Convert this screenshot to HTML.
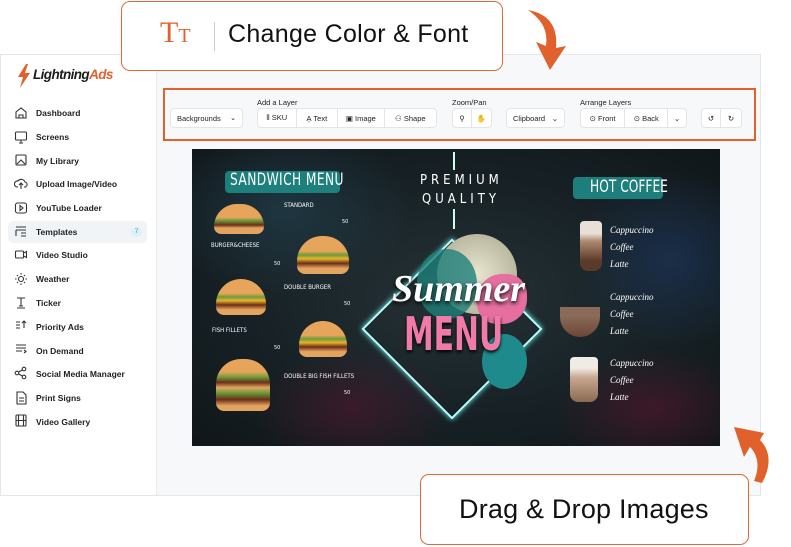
<!DOCTYPE html>
<html><head><meta charset="utf-8"><style>
*{box-sizing:border-box;margin:0;padding:0}
body{width:791px;height:547px;background:#fff;font-family:"Liberation Sans",sans-serif;position:relative;overflow:hidden;color:#222}
.abs{position:absolute}
.frame{left:0;top:54px;width:761px;height:442px;border:1px solid #e4e6ea;background:#f7f8fa}
.side{left:1px;top:55px;width:156px;height:440px;background:#fff;border-right:1px solid #e8eaee}
.item{position:absolute;left:36px;font-size:8.5px;color:#222;font-weight:bold;letter-spacing:0}
.tb{left:163px;top:88px;width:593px;height:53px;border:2px solid #e0612c;background:#f7f8fa}
.btn{position:absolute;top:108px;height:20px;background:#fff;border:1px solid #e3e5e9;border-radius:4px;font-size:7.5px;color:#222;display:flex;align-items:center}
.seg{border-right:1px solid #e3e5e9;height:100%;display:flex;align-items:center;justify-content:center;gap:3px}
.lbl{position:absolute;top:98px;font-size:7.5px;color:#222}
.callout{border:1.5px solid #e0693a;border-radius:9px;background:#fff}
.menu{left:192px;top:149px;width:528px;height:297px;background:radial-gradient(ellipse at 50% 50%,#263236 0%,#162024 60%,#101619 100%);overflow:hidden}
.mt{position:absolute;color:#fff;font-family:"DejaVu Sans Condensed","Liberation Sans",sans-serif}
</style></head><body>

<div class="abs frame"></div>
<div class="abs side"></div>

<svg class="abs" style="left:16px;top:64px" width="16" height="24" viewBox="0 0 16 24"><path d="M10 0 L2 13 H7 L4 24 L14 9 H9 L12 0Z" fill="#e0612c"/></svg>
<div class="abs" style="left:33px;top:67px;font-size:13.5px;font-weight:bold;font-style:italic;letter-spacing:-0.6px;color:#1c1c1c">Lightning<span style="color:#e0612c">Ads</span></div>

<div class="abs" style="left:8px;top:221px;width:139px;height:22px;background:#f1f4f7;border-radius:5px"></div>
<div class="abs" style="left:131px;top:227px;width:11px;height:10px;border-radius:50%;background:#dff0f8;color:#3a9ad0;font-size:6.5px;text-align:center;line-height:10px">7</div>
<div class="item" style="top:108px">Dashboard</div>
<div class="item" style="top:132px">Screens</div>
<div class="item" style="top:156px">My Library</div>
<div class="item" style="top:179px">Upload Image/Video</div>
<div class="item" style="top:203px">YouTube Loader</div>
<div class="item" style="top:227px">Templates</div>
<div class="item" style="top:250px">Video Studio</div>
<div class="item" style="top:274px">Weather</div>
<div class="item" style="top:298px">Ticker</div>
<div class="item" style="top:322px">Priority Ads</div>
<div class="item" style="top:346px">On Demand</div>
<div class="item" style="top:369px">Social Media Manager</div>
<div class="item" style="top:393px">Print Signs</div>
<div class="item" style="top:417px">Video Gallery</div>
<svg class="abs" style="left:14px;top:106px" width="14" height="330" viewBox="0 0 14 330" fill="none" stroke="#333" stroke-width="1.1">
<path d="M2 12 V6 L7 2 L12 6 V12 Z M5 12 V9 H9 V12"/>
<rect x="1.5" y="26" width="11" height="8" rx="1"/><path d="M5 37 H9 M7 34V37"/>
<rect x="2" y="49" width="10" height="10" rx="1"/><path d="M3 58 L7 54 L11 58"/>
<path d="M4 81 H3 A3 3 0 0 1 4 75 A4 4 0 0 1 11 76 A2.5 2.5 0 0 1 10 81 M7 83 V77 M5 79 L7 77 L9 79"/>
<rect x="1.5" y="97" width="11" height="10" rx="2"/><path d="M6 99.5 L9 102 L6 104.5Z"/>
<path d="M2 121 H12 M2 124 V130 M2 124 H12 M7 127 H12 M7 130 H12"/>
<rect x="1.5" y="145" width="8" height="7" rx="1"/><path d="M9.5 147 L12.5 145.5 V151.5 L9.5 150"/>
<circle cx="7" cy="173" r="2.5"/><path d="M7 167 V168.5 M7 177.5 V179 M1 173 H2.5 M11.5 173 H13 M3 169 L4 170 M10 176 L11 177 M3 177 L4 176 M10 170 L11 169"/>
<path d="M3 192 H11 M7 192 V200 M5 200 H9 M3 202 H11"/>
<path d="M2 216 H6 M2 219 H6 M2 222 H6 M10 222 V215 M8 217 L10 215 L12 217"/>
<path d="M2 239 H12 M2 242 H12 M2 245 H8 M10 244 L12 245.5 L10 247"/>
<circle cx="3" cy="267" r="1.8"/><circle cx="10" cy="263" r="1.8"/><circle cx="10" cy="271" r="1.8"/><path d="M4.6 266 L8.4 264 M4.6 268 L8.4 270"/>
<path d="M3 286 H9 L12 289 V298 H3Z M5 292 H10 M5 295 H10"/>
<rect x="2" y="309" width="10" height="11" rx="1"/><path d="M4.5 309 V320 M9.5 309V320 M2 314.5 H12"/>
</svg>

<div class="abs tb"></div>
<div class="btn" style="left:170px;width:73px;justify-content:space-between;padding:0 6px">Backgrounds <span style="font-size:7px">⌄</span></div>
<div class="lbl" style="left:257px">Add a Layer</div>
<div class="btn" style="left:257px;width:180px">
<div class="seg" style="width:39px">⦀ SKU</div><div class="seg" style="width:42px">A̤ Text</div><div class="seg" style="width:47px">▣ Image</div><div class="seg" style="width:52px;border:0">⚇ Shape</div></div>
<div class="lbl" style="left:452px">Zoom/Pan</div>
<div class="btn" style="left:452px;width:40px"><div class="seg" style="width:20px">⚲</div><div class="seg" style="width:20px;border:0">✋</div></div>
<div class="btn" style="left:506px;width:59px;justify-content:space-between;padding:0 6px">Clipboard <span>⌄</span></div>
<div class="lbl" style="left:580px">Arrange Layers</div>
<div class="btn" style="left:580px;width:107px"><div class="seg" style="width:45px">⊙ Front</div><div class="seg" style="width:44px">⊙ Back</div><div class="seg" style="width:18px;border:0">⌄</div></div>
<div class="btn" style="left:701px;width:41px"><div class="seg" style="width:20px">↺</div><div class="seg" style="width:21px;border:0">↻</div></div>

<div class="abs menu">
 <div class="abs" style="left:-40px;top:-30px;width:260px;height:180px;background:radial-gradient(ellipse,rgba(40,80,100,.45),transparent 70%)"></div>
 <div class="abs" style="left:380px;top:20px;width:200px;height:180px;background:radial-gradient(ellipse,rgba(30,60,110,.5),transparent 70%)"></div>
 <div class="abs" style="left:60px;top:200px;width:200px;height:120px;background:radial-gradient(ellipse,rgba(100,20,50,.45),transparent 70%)"></div>
 <div class="abs" style="left:360px;top:200px;width:200px;height:120px;background:radial-gradient(ellipse,rgba(110,20,50,.45),transparent 70%)"></div>
 <div class="abs" style="left:33px;top:22px;width:115px;height:22px;background:#1e8a85;border-radius:4px;opacity:.9"></div>
 <div class="mt" style="left:38px;top:21px;font-size:17px;letter-spacing:0.5px;transform:scaleX(.8);transform-origin:left">SANDWICH MENU</div>
 <div class="abs" style="left:381px;top:28px;width:90px;height:22px;background:#1e8a85;border-radius:4px;opacity:.9"></div>
 <div class="mt" style="left:398px;top:28px;font-size:17px;transform:scaleX(.8);transform-origin:left">HOT COFFEE</div>
 <div class="abs" style="left:261px;top:3px;width:2px;height:18px;background:#cfe"></div>
 <div class="abs" style="left:261px;top:60px;width:2px;height:20px;background:#cfe"></div>
 <div class="mt" style="left:228px;top:24px;font-size:13px;letter-spacing:4px">PREMIUM</div>
 <div class="mt" style="left:230px;top:43px;font-size:13px;letter-spacing:4px">QUALITY</div>
 <div class="abs" style="left:196px;top:116px;width:128px;height:128px;border:2px solid #bff;transform:rotate(45deg);box-shadow:0 0 6px #6ff"></div>
 <div class="abs" style="left:245px;top:85px;width:80px;height:80px;border-radius:50%;background:radial-gradient(#e8e6d0,#a9a58e)"></div>
 <div class="abs" style="left:225px;top:100px;width:60px;height:70px;border-radius:50%;background:#1e7f7a;opacity:.8"></div>
 <div class="abs" style="left:285px;top:125px;width:50px;height:50px;border-radius:50% 40%;background:#e66fa0"></div>
 <div class="abs" style="left:290px;top:185px;width:45px;height:55px;border-radius:50%;background:#1f8a8c"></div>
 <div class="mt" style="left:200px;top:118px;font-size:38px;font-style:italic;font-weight:bold;font-family:'Liberation Serif',serif;text-shadow:0 2px 4px #000">Summer</div>
 <div class="mt" style="left:212px;top:158px;font-size:46px;font-weight:bold;color:#f07aa8;transform:scaleX(.72);transform-origin:left;text-shadow:0 2px 4px #000">MENU</div>
 <div class="abs" style="left:22px;top:55px;width:50px;height:30px;border-radius:25px 25px 8px 8px;background:linear-gradient(#e7a55c 45%,#6c9c3a 55%,#6b2e1a 70%,#e2a45e 80%)"></div>
 <div class="abs" style="left:105px;top:87px;width:52px;height:38px;border-radius:25px 25px 8px 8px;background:linear-gradient(#e7a55c 40%,#6c9c3a 50%,#eab42a 60%,#6b2e1a 72%,#e2a45e 85%)"></div>
 <div class="abs" style="left:24px;top:130px;width:50px;height:36px;border-radius:25px 25px 8px 8px;background:linear-gradient(#e7a55c 40%,#6c9c3a 50%,#eab42a 60%,#6b2e1a 72%,#e2a45e 85%)"></div>
 <div class="abs" style="left:107px;top:172px;width:48px;height:36px;border-radius:25px 25px 8px 8px;background:linear-gradient(#e7a55c 40%,#6c9c3a 50%,#eab42a 60%,#6b2e1a 72%,#e2a45e 85%)"></div>
 <div class="abs" style="left:24px;top:210px;width:54px;height:52px;border-radius:25px 25px 8px 8px;background:linear-gradient(#e7a55c 25%,#6c9c3a 35%,#6b2e1a 45%,#e2a45e 55%,#6c9c3a 65%,#6b2e1a 78%,#e2a45e 90%)"></div>
 <div class="mt" style="left:92px;top:53px;font-size:6px">STANDARD</div>
 <div class="mt" style="left:19px;top:93px;font-size:6px">BURGER&amp;CHEESE</div>
 <div class="mt" style="left:92px;top:135px;font-size:6px">DOUBLE BURGER</div>
 <div class="mt" style="left:20px;top:178px;font-size:6px">FISH FILLETS</div>
 <div class="mt" style="left:92px;top:224px;font-size:6px">DOUBLE BIG FISH FILLETS</div>
 <div class="mt" style="left:150px;top:70px;font-size:5.5px">50</div>
 <div class="mt" style="left:82px;top:112px;font-size:5.5px">50</div>
 <div class="mt" style="left:152px;top:152px;font-size:5.5px">50</div>
 <div class="mt" style="left:82px;top:196px;font-size:5.5px">50</div>
 <div class="mt" style="left:152px;top:241px;font-size:5.5px">50</div>
 <div class="abs" style="left:388px;top:72px;width:22px;height:50px;border-radius:4px 4px 8px 8px;background:linear-gradient(#e8e0d8 25%,#b08a70 40%,#5a3a28 80%)"></div>
 <div class="abs" style="left:368px;top:158px;width:40px;height:30px;border-radius:0 0 20px 20px;background:linear-gradient(#8a6a58 30%,#6b4636)"></div>
 <div class="abs" style="left:378px;top:208px;width:28px;height:45px;border-radius:4px 4px 8px 8px;background:linear-gradient(#f0ebe5 25%,#c8a890 45%,#8a6a50)"></div>
 <div class="mt" style="left:418px;top:73px;font-size:9px;font-style:italic;line-height:17px;font-family:'Liberation Serif',serif">Cappuccino<br>Coffee<br>Latte</div>
 <div class="mt" style="left:418px;top:140px;font-size:9px;font-style:italic;line-height:17px;font-family:'Liberation Serif',serif">Cappuccino<br>Coffee<br>Latte</div>
 <div class="mt" style="left:418px;top:206px;font-size:9px;font-style:italic;line-height:17px;font-family:'Liberation Serif',serif">Cappuccino<br>Coffee<br>Latte</div>
</div>

<div class="abs callout" style="left:121px;top:1px;width:382px;height:70px"></div>
<div class="abs" style="left:160px;top:18px;font-family:'Liberation Serif',serif;color:#e0612c;font-size:30px;line-height:30px">T<span style="font-size:20px">T</span></div>
<div class="abs" style="left:214px;top:22px;width:1px;height:29px;background:#ccc"></div>
<div class="abs" style="left:228px;top:20px;font-size:25px;letter-spacing:0.3px;color:#111">Change Color &amp; Font</div>
<svg class="abs" style="left:520px;top:8px" width="55" height="65" viewBox="0 0 55 65"><path d="M8 2 C30 6 38 20 36 40 L46 38 L30 62 L16 34 L26 38 C28 22 22 12 8 2Z" fill="#e0612c"/></svg>

<div class="abs callout" style="left:420px;top:474px;width:329px;height:71px"></div>
<div class="abs" style="left:459px;top:494px;font-size:27px;letter-spacing:0.2px;color:#111">Drag &amp; Drop Images</div>
<svg class="abs" style="left:730px;top:415px" width="50" height="70" viewBox="0 0 50 70"><path d="M32 68 C42 50 40 35 30 25 L34 18 L4 12 L14 42 L20 32 C28 40 30 52 24 66Z" fill="#e0612c"/></svg>
</body></html>
